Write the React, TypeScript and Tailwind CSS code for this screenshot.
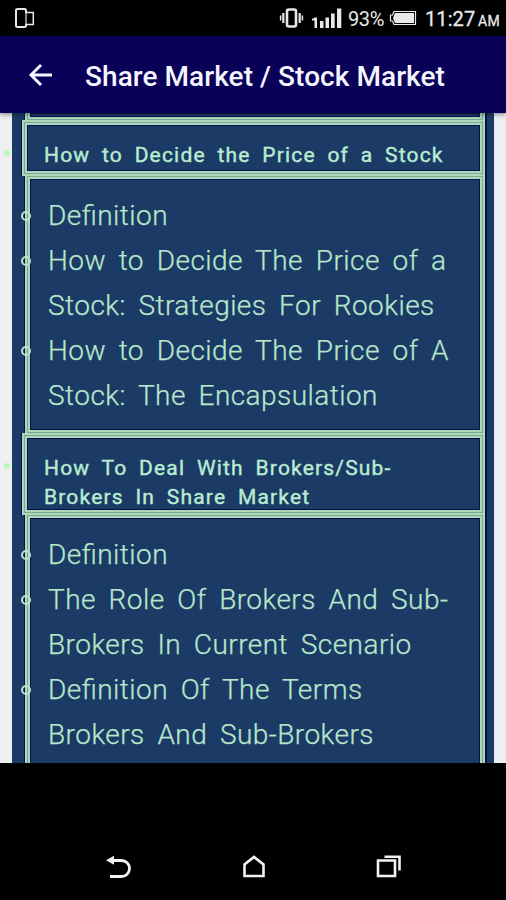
import type { ReactNode } from 'react';

interface Section {
  title: string[];
  headingHeight: string;
  items: string[][];
}

const sections: Section[] = [
  {
    title: ['How to Decide the Price of a Stock'],
    headingHeight: 'h-14',
    items: [
      ['Definition'],
      ['How to Decide The Price of a', 'Stock: Strategies For Rookies'],
      ['How to Decide The Price of A', 'Stock: The Encapsulation'],
    ],
  },
  {
    title: ['How To Deal With Brokers/Sub-', 'Brokers In Share Market'],
    headingHeight: 'h-[82px]',
    items: [
      ['Definition'],
      ['The Role Of Brokers And Sub-', 'Brokers In Current Scenario'],
      ['Definition Of The Terms', 'Brokers And Sub-Brokers'],
    ],
  },
];

// double border with a muted green gap between the two lines
const frame =
  'border-5 border-double border-[#afd8bb] [background:linear-gradient(#1b3b66,#1b3b66)_padding-box,#7ba895] shadow-[inset_0_0_0_1px_#07104f,2px_0_0_#07104f,-1px_0_0_#07104f]';

function StatusBar() {
  return (
    <div className="flex h-9 shrink-0 items-center bg-black pl-[14px] text-[#e8e8e8]">
      <svg width="22" height="22" viewBox="0 0 22 22" fill="none" stroke="currentColor">
        <path d="M12 5V3.500q0-1.500-1.500-1.500H3.500Q2 2 2 3.500v15Q2 20 3.500 20h7q1.500 0 1.500-1.500V17" strokeWidth="2" />
        <path d="M12 5v12" strokeWidth="1.200" />
        <path d="M11 5.500h8.300v12H11" strokeWidth="1.500" />
      </svg>
      <svg className="ml-[243px]" width="26" height="22" viewBox="0 0 26 22" fill="none" stroke="currentColor">
        <rect x="8" y="2.500" width="9" height="17" rx="2" strokeWidth="2.600" />
        <path d="M4.300 6v10M20.700 6v10" strokeWidth="2.200" />
        <path d="M1.600 8.500v5M23.400 8.500v5" strokeWidth="1.500" />
      </svg>
      <svg className="ml-[7px]" width="30" height="22" viewBox="0 0 30 22" fill="currentColor">
        <path d="M0 12 3 10.500h2V21H2.500v-7.500H0zM8 14h3.500v7H8zM13.500 10.500H17V21h-3.500zM19 6.500h3.700V21H19zM25 1.500h4.300V21H25z" />
      </svg>
      <span className="ml-[6px] mt-0.5 w-[41px] text-[20px] tracking-[-0.4px]">93%</span>
      <svg width="28" height="18" viewBox="0 0 28 18" fill="none" stroke="currentColor">
        <path d="M5 2.500h21.500v13H5L3.500 12H1.500V6h2z" strokeWidth="1.200" />
        <path d="M6 4h19v10H6L4 9z" fill="currentColor" stroke="none" />
      </svg>
      <span className="ml-[8px] mt-0.5 w-[52px] text-[20px] tracking-[0.1px] [-webkit-text-stroke:0.3px]">11:27</span>
      <span className="ml-px mt-[6px] text-[14px] tracking-[0.4px] [-webkit-text-stroke:0.3px]">AM</span>
    </div>
  );
}

function Header() {
  return (
    <header className="relative z-10 flex h-[77px] shrink-0 items-center bg-[#090057] pl-7 text-[#f5f5ff] shadow-[0_2px_4px_rgba(0,0,0,0.35)]">
      <svg width="25" height="24" viewBox="0 0 25 24" fill="none" stroke="currentColor" strokeWidth="2.900">
        <path d="M24 12H3M13 2 3 12l10 10" />
      </svg>
      <h1 className="ml-8 mt-1 whitespace-nowrap text-[28px] font-medium leading-8 tracking-[0.06px]">Share Market / Stock Market</h1>
    </header>
  );
}

function Heading({ height, children }: { height: string; children: ReactNode }) {
  return (
    <h2 className={`relative -mt-0.5 mr-[9px] ml-[10px] pt-[15.5px] pl-[17px] text-[21px] leading-[29.5px] font-normal tracking-[1.18px] text-[#b9ecd0] [-webkit-text-stroke:0.4px] [word-spacing:5.3px] ${height} ${frame}`}>
      <i className="absolute top-[25px] -left-[23px] size-[6px] rounded-full bg-[#b8f9ba]" />
      {children}
    </h2>
  );
}

function Topics({ items }: { items: string[][] }) {
  return (
    <ul className={`-mt-0.5 mr-[9px] ml-[13px] pt-[13.5px] pb-[12.5px] pl-[18px] text-[28px] leading-[45px] font-light tracking-[0.45px] text-[#b8e6ca] [-webkit-text-stroke:0.25px] [font-feature-settings:'liga'_1] [word-spacing:5.4px] ${frame}`}>
      {items.map((item, i) => (
        <li key={i} className="relative">
          <i className="absolute top-[18px] -left-[27px] size-[10px] rounded-full border-2 border-[#b8e6ca]" />
          {item.map((line) => (
            <div key={line} className="whitespace-nowrap">{line}</div>
          ))}
        </li>
      ))}
    </ul>
  );
}

export default function App() {
  return (
    <div className="flex h-[900px] w-[506px] flex-col overflow-hidden bg-black font-[Roboto,sans-serif]">
      <StatusBar />
      <Header />
      <main className="h-[650px] shrink-0 overflow-hidden bg-[#efeff1] px-3">
        <div className="h-[650px] bg-[#1b3b66]">
          <div className={`mr-[9px] ml-[13px] h-[9px] border-t-0 ${frame}`} />
          {sections.map((section) => (
            <section key={section.title[0]}>
              <Heading height={section.headingHeight}>
                {section.title.map((line) => (
                  <div key={line} className="whitespace-nowrap">{line}</div>
                ))}
              </Heading>
              <Topics items={section.items} />
            </section>
          ))}
        </div>
      </main>
      <nav className="flex flex-1 items-center pt-[71px] pl-[106px] text-[#f2f2f2]">
        <svg width="26" height="24" viewBox="0 0 26 24" fill="none" stroke="currentColor" strokeWidth="2.800">
          <path d="M6 5.500h9.500a7.800 7.800 0 0 1 0 16H4" />
          <path d="M0 5.200 8 .7v9z" fill="currentColor" stroke="none" />
        </svg>
        <svg className="ml-[110px]" width="24" height="24" viewBox="0 0 24 24" fill="none" stroke="currentColor" strokeWidth="2.600">
          <path d="M2.500 21V9.500L12 2l9.500 7.500V21z" />
        </svg>
        <svg className="ml-[110px]" width="26" height="24" viewBox="0 0 26 24" fill="none" stroke="currentColor" strokeWidth="2.600">
          <path d="M2 5.500h17v15.500H2zM8.500 1.800h15v13.700" />
        </svg>
      </nav>
    </div>
  );
}
